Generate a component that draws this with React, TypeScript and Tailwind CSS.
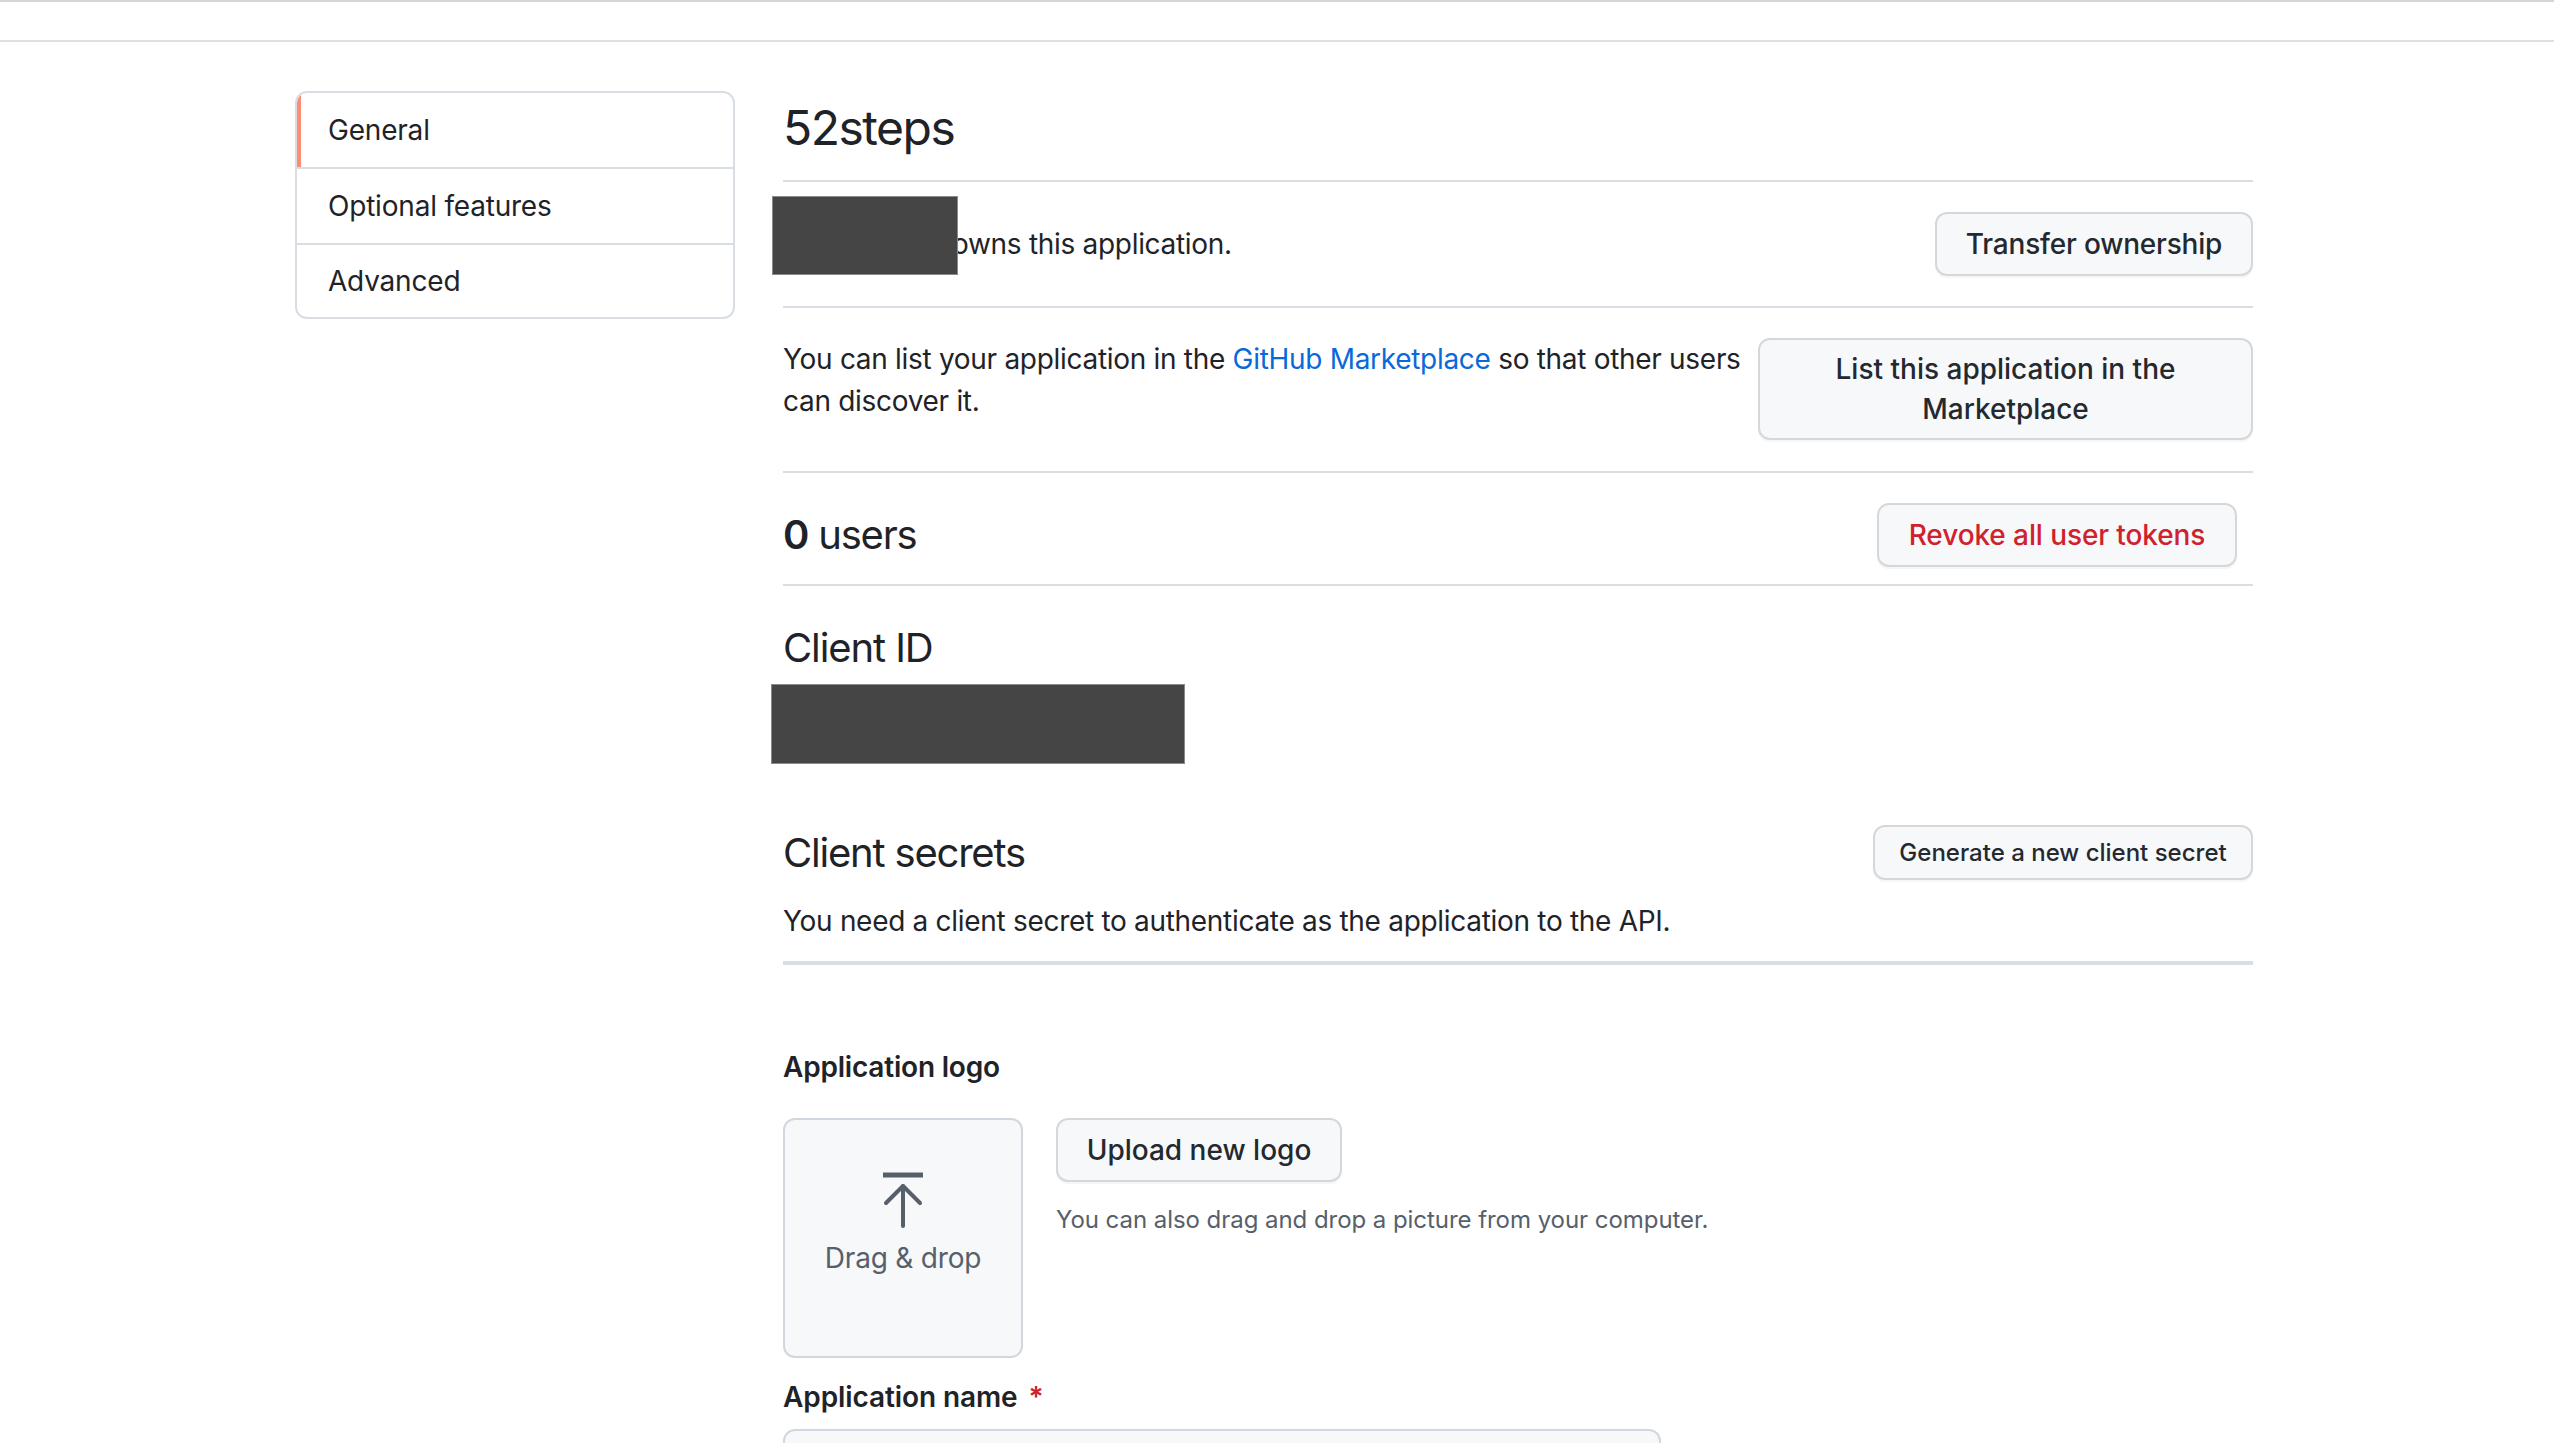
import React from "react";

const font = { fontFamily: "Inter, 'Noto Sans', 'Liberation Sans', sans-serif" };

function Btn({ children, className = "" }: { children: React.ReactNode; className?: string }) {
  return (
    <button
      className={
        "rounded-[12px] border-2 border-[#d5d8db] bg-[#f6f8fa] font-medium text-[#24292f] shadow-[0_2px_0_rgba(31,35,40,0.04)] " +
        className
      }
    >
      {children}
    </button>
  );
}

function UploadIcon() {
  return (
    <svg width="48" height="56" viewBox="0 0 48 56" fill="none" stroke="#57606a" strokeWidth="4" strokeLinecap="round" strokeLinejoin="round">
      <path d="M4 3h40" strokeWidth="5" strokeLinecap="butt" />
      <path d="M24 14v40" />
      <path d="M7 31L24 14L41 31" />
    </svg>
  );
}

export default function App() {
  return (
    <div className="h-[1443px] w-[2554px] overflow-hidden bg-white text-[#1f2328]" style={font}>
      {/* top strip */}
      <div className="h-[2px] bg-[#d3d5d9]" />
      <div className="h-[38px]" />
      <div className="h-[2px] bg-[#dde1e5]" />

      <div className="flex pl-[295px] pt-[49px]">
        {/* sidebar */}
        <nav className="w-[440px] shrink-0 self-start overflow-hidden rounded-[12px] border-2 border-[#d8dee4] tracking-[-0.2px]">
          <div className="relative flex h-[74px] items-center pl-[31px] text-[28px]">
            <span className="absolute left-0 top-0 h-full w-[4px] bg-[#fd8c73]" />
            General
          </div>
          <div className="flex h-[76px] items-center border-t-2 border-[#d8dee4] pl-[31px] text-[28px]">Optional features</div>
          <div className="flex h-[74px] items-center border-t-2 border-[#d8dee4] pl-[31px] text-[28px]">Advanced</div>
        </nav>

        {/* main */}
        <main className="ml-[48px] w-[1470px]">
          <div className="border-b-2 border-[#d8dee4] pb-[22px] pt-[7px]">
            <h1 className="text-[48px] font-normal leading-[60px] tracking-[-1.5px]">52steps</h1>
          </div>

          {/* owner row */}
          <div className="relative flex h-[126px] items-center justify-between border-b-2 border-[#d8dee4]">
            <p className="pl-[169px] text-[28px] leading-[42px] tracking-[-0.3px]">owns this application.</p>
            <div className="absolute left-[-11px] top-[14px] h-[79px] w-[186px] border border-[#8a8a8a] bg-[#454545]" />
            <Btn className="h-[64px] w-[318px] text-[28px] leading-[40px] tracking-[-0.2px]">Transfer ownership</Btn>
          </div>

          {/* marketplace row */}
          <div className="flex items-start justify-between border-b-2 border-[#d8dee4] pb-[31px] pt-[30px]">
            <p className="text-[28px] leading-[42px] tracking-[-0.3px]">
              You can list your application in the <a className="text-[#0969da]">GitHub Marketplace</a> so that other users
              <br />
              can discover it.
            </p>
            <Btn className="w-[495px] py-[9px] text-center text-[28px] leading-[40px]">
              List this application in the
              <br />
              Marketplace
            </Btn>
          </div>

          {/* users row */}
          <div className="flex items-center justify-between border-b-2 border-[#d8dee4] pb-[17px] pt-[30px]">
            <h2 className="text-[40px] leading-[60px] tracking-[-1.2px]">
              <span className="font-semibold">0</span> users
            </h2>
            <Btn className="mr-[16px] h-[64px] w-[360px] text-[28px] leading-[40px] tracking-[-0.1px] !text-[#cf222e]">Revoke all user tokens</Btn>
          </div>

          {/* client id */}
          <div className="pt-[32px]">
            <h2 className="text-[40px] leading-[60px] tracking-[-1.1px]">Client ID</h2>
            <div className="ml-[-12px] mt-[6px] h-[80px] w-[414px] border border-[#8a8a8a] bg-[#454545]" />
          </div>

          {/* client secrets */}
          <div className="mt-[61px] flex h-[55px] items-center justify-between">
            <h2 className="text-[40px] leading-[60px] tracking-[-1.2px]">Client secrets</h2>
            <Btn className="h-[55px] w-[380px] text-[24px] leading-[36px]">Generate a new client secret</Btn>
          </div>
          <p className="mt-[20px] text-[28px] leading-[42px] tracking-[-0.3px]">You need a client secret to authenticate as the application to the API.</p>
          <div className="mt-[19px] h-[4px] bg-[#d8dee4]" />

          {/* logo */}
          <h3 className="mt-[81px] text-[28px] font-semibold leading-[42px] tracking-[-0.2px]">Application logo</h3>
          <div className="mt-[30px] flex items-start">
            <div className="flex h-[240px] w-[240px] flex-col items-center rounded-[12px] border-2 border-[#d0d7de] bg-[#f6f8fa] pt-[52px]">
              <UploadIcon />
              <span className="mt-[9px] text-[28px] leading-[42px] tracking-[-0.2px] text-[#57606a]">Drag &amp; drop</span>
            </div>
            <div className="ml-[33px]">
              <Btn className="h-[64px] w-[286px] text-[28px] leading-[40px]">Upload new logo</Btn>
              <p className="mt-[20px] text-[24px] leading-[36px] tracking-[-0.05px] text-[#57606a]">You can also drag and drop a picture from your computer.</p>
            </div>
          </div>

          <h3 className="mt-[18px] text-[28px] font-semibold leading-[42px] tracking-[-0.1px]">
            Application name <span className="ml-[4px] text-[#cf222e]">*</span>
          </h3>
          <div className="mt-[11px] h-[64px] w-[878px] rounded-[12px] border-2 border-[#d0d7de] bg-[#f6f8fa]" />
        </main>
      </div>
    </div>
  );
}
